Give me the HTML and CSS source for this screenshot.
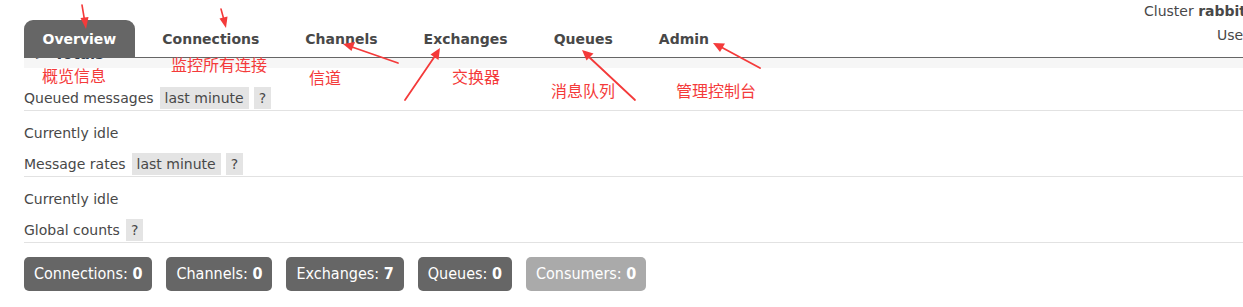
FILE: index.html
```html
<!DOCTYPE html>
<html lang="en">
<head>
<meta charset="utf-8">
<title>RabbitMQ Management - Overview</title>
<link rel="stylesheet" href="styles.css">
</head>
<body>
<div class="page">
  <header class="header">
    <nav class="tabs">
      <a class="tab active">Overview</a>
      <a class="tab">Connections</a>
      <a class="tab">Channels</a>
      <a class="tab">Exchanges</a>
      <a class="tab">Queues</a>
      <a class="tab">Admin</a>
    </nav>
    <div class="topnav">
      <div class="topnav-line">Cluster <b>rabbit@localhost</b></div>
      <div class="topnav-line user">User <b>guest</b> Log out</div>
    </div>
  </header>
  <div class="strip">
    <h2 class="section-title"><span class="toggler">&#9658;</span> Totals</h2>
  </div>
  <main class="content">
    <div class="row">
      <span class="label">Queued messages</span>
      <span class="chip">last minute</span>
      <span class="chip">?</span>
    </div>
    <p class="idle">Currently idle</p>
    <div class="row">
      <span class="label">Message rates</span>
      <span class="chip">last minute</span>
      <span class="chip">?</span>
    </div>
    <p class="idle">Currently idle</p>
    <div class="row">
      <span class="label">Global counts</span>
      <span class="chip">?</span>
    </div>
    <div class="badges">
      <span class="badge">Connections: <b>0</b></span>
      <span class="badge">Channels: <b>0</b></span>
      <span class="badge">Exchanges: <b>7</b></span>
      <span class="badge">Queues: <b>0</b></span>
      <span class="badge disabled">Consumers: <b>0</b></span>
    </div>
  </main>
</div>

<div class="note note-overview">概览信息</div>
<div class="note note-connections">监控所有连接</div>
<div class="note note-channels">信道</div>
<div class="note note-exchanges">交换器</div>
<div class="note note-queues">消息队列</div>
<div class="note note-admin">管理控制台</div>

<svg class="arrows" width="1243" height="307" viewBox="0 0 1243 307">
  <g fill="#f43a3a" stroke="#f43a3a" stroke-linecap="round">
    <line x1="82" y1="5" x2="84.5" y2="20" stroke-width="1.6"/>
    <polygon points="86,29 80.5,18 88.5,17" stroke="none"/>
    <line x1="221" y1="9" x2="224" y2="20" stroke-width="1.6"/>
    <polygon points="226,28 219.5,18.5 227.5,16.5" stroke="none"/>
    <line x1="398" y1="63" x2="352" y2="47" stroke-width="1.8"/>
    <polygon points="343,44 355,42 351.5,51" stroke="none"/>
    <line x1="405" y1="100" x2="435" y2="56" stroke-width="1.8"/>
    <polygon points="440,48 438.5,60 430.5,54.5" stroke="none"/>
    <line x1="635" y1="100" x2="589" y2="57" stroke-width="1.8"/>
    <polygon points="582,50 593.5,53.5 586.5,60.5" stroke="none"/>
    <line x1="760" y1="68" x2="721" y2="47" stroke-width="1.8"/>
    <polygon points="713,43 725,43.5 720,52" stroke="none"/>
  </g>
</svg>
</body>
</html>
```

FILE: styles.css
```css
* {
  box-sizing: border-box;
}

html, body {
  margin: 0;
  padding: 0;
  overflow: hidden;
  background: #fff;
}

body {
  font-family: "DejaVu Sans", Verdana, sans-serif;
  font-size: 14px;
  color: #484848;
  width: 1243px;
  height: 307px;
  position: relative;
}

.page {
  padding-left: 24px;
}

/* ---------- header / tabs ---------- */
.header {
  display: grid;
  grid-template-columns: 1fr 99px;
  height: 58px;
  border-bottom: 1px solid #666;
}

.tabs {
  display: flex;
  align-self: end;
  gap: 9px;
}

.tab {
  display: block;
  height: 37px;
  line-height: 38px;
  padding: 0 18.5px;
  font-weight: bold;
  font-size: 14px;
  color: #484848;
  border-radius: 9px 9px 0 0;
  white-space: nowrap;
}

.tab.active {
  background: #666;
  color: #fff;
}

.topnav {
  white-space: nowrap;
  padding-top: 2px;
  overflow: hidden;
}

.topnav-line {
  height: 24px;
  line-height: 18px;
}

.topnav-line.user {
  padding-left: 73px;
}

/* ---------- clipped section heading strip ---------- */
.strip {
  height: 10px;
  background: #f6f6f6;
  overflow: hidden;
}

.section-title {
  margin: -12px 0 0 12px;
  font-size: 15px;
  line-height: 17px;
  color: #2f3a48;
  font-weight: bold;
}

.toggler {
  font-size: 9px;
  color: #444;
  margin-right: 6px;
}

/* ---------- content ---------- */
.content {
  padding-top: 19px;
}

.row {
  display: flex;
  align-items: center;
  gap: 5px;
  height: 24px;
  padding-bottom: 1px;
  border-bottom: 1px solid #e2e2e2;
}

.label {
  margin-right: 1px;
}

.chip {
  display: block;
  height: 22px;
  line-height: 22px;
  padding: 0 5px;
  background: #e4e4e4;
  color: #484848;
}

.idle {
  margin: 14px 0 12px;
  line-height: 16px;
}

.badges {
  display: flex;
  gap: 14px;
  margin-top: 14px;
}

.badge {
  display: block;
  height: 34px;
  line-height: 34px;
  padding: 0 10px;
  border-radius: 5px;
  background: #666;
  color: #fff;
  font-family: "Liberation Sans Narrow", "DejaVu Sans Condensed", "Arial Narrow", sans-serif;
  font-size: 16px;
  white-space: nowrap;
}

.badge.disabled {
  background: #aaa;
}

/* ---------- annotations (overlay) ---------- */
.note {
  position: absolute;
  font-family: "Noto Sans CJK SC", "Microsoft YaHei", sans-serif;
  font-size: 16px;
  line-height: 18px;
  color: #f43a3a;
  white-space: nowrap;
}

.note-overview { left: 42px; top: 66px; }
.note-connections { left: 171px; top: 55px; }
.note-channels { left: 309px; top: 68px; }
.note-exchanges { left: 452px; top: 67px; }
.note-queues { left: 551px; top: 81px; }
.note-admin { left: 676px; top: 81px; }

.arrows {
  position: absolute;
  left: 0;
  top: 0;
  pointer-events: none;
}
```
